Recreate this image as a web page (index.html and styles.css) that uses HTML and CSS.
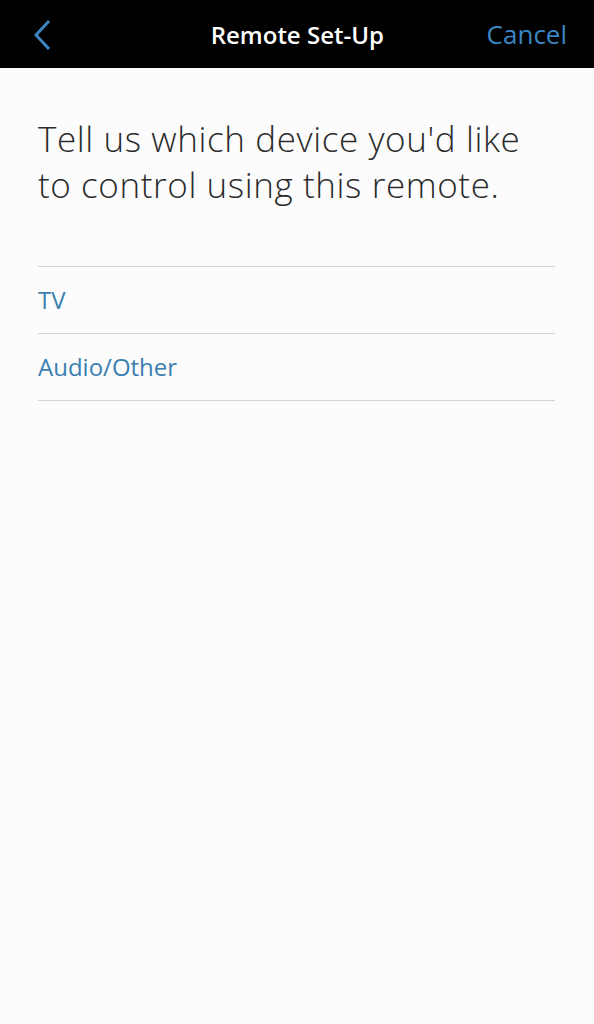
FILE: index.html
```html
<!DOCTYPE html>
<html lang="en">
<head>
    <meta charset="UTF-8">
    <title>Remote Set-Up</title>
    <link rel="stylesheet" href="styles.css">
</head>
<body>
    <div class="topbar">
        <div class="back">
            <svg width="20" height="32" viewBox="0 0 20 32"><path d="M17 2 L4 16 L17 30" fill="none" stroke="#3b86c2" stroke-width="3"/></svg>
        </div>
        <div class="title">Remote Set-Up</div>
        <div class="cancel">Cancel</div>
    </div>
    <div class="content">
        <h1 class="question">Tell us which device you'd like to control using this remote.</h1>
        <ul class="choices">
            <li>TV</li>
            <li>Audio/Other</li>
        </ul>
    </div>
</body>
</html>
```

FILE: styles.css
```css
body{
    margin:0;
    background:#fcfcfc;
    font-family:"Open Sans","Noto Sans",sans-serif;
}
.topbar{
    height:68px;
    background:#000;
    display:flex;
    align-items:center;
    justify-content:space-between;
    padding:0 27px 0 32px;
}
.back{
    width:20px;
    height:32px;
    display:flex;
    margin-top:2px;
}
.title{
    color:#fff;
    font-size:24px;
    font-weight:600;
    margin-left:56px;
}
.cancel{
    color:#3b86c2;
    font-size:26px;
}
.content{
    padding:0 39px 0 38px;
}
.question{
    margin:48px 0 0;
    max-width:500px;
    font-size:35px;
    font-weight:300;
    line-height:46px;
    letter-spacing:0.6px;
    color:#2b2b2b;
}
.choices{
    list-style:none;
    margin:58px 0 0;
    padding:0;
    border-top:1px solid #d4d4d4;
}
.choices li{
    height:66px;
    line-height:66px;
    border-bottom:1px solid #d4d4d4;
    font-size:24px;
    color:#3a7fb0;
}
```
